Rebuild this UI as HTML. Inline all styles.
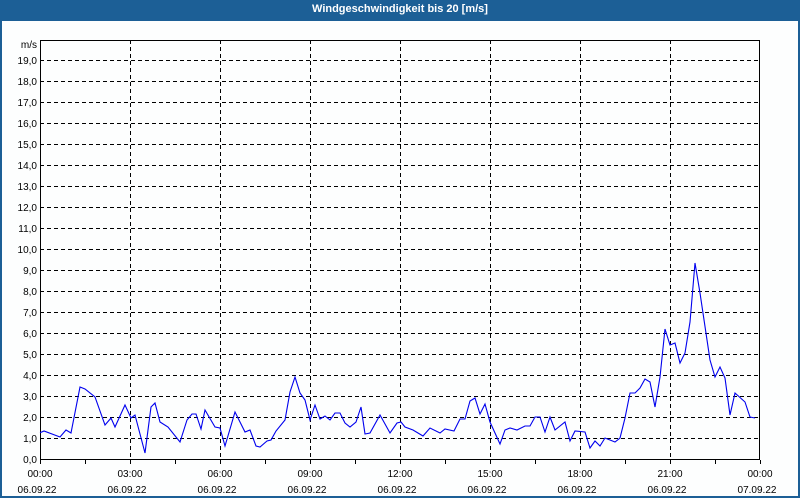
<!DOCTYPE html>
<html><head><meta charset="utf-8"><style>
html,body{margin:0;padding:0;background:#fff}
.win{position:absolute;left:0;top:0;width:796px;height:496px;border:2px solid #1c5f96;border-top:none;background:#fdfefe}
.title{position:absolute;left:0;top:0;width:800px;height:21px;background:#1c5f96;color:#fff;font:bold 11px "Liberation Sans",sans-serif;text-align:center;line-height:19px}
svg{position:absolute;left:0;top:0}
text{font-family:"Liberation Sans",sans-serif;font-size:10px;fill:#000}
</style></head><body>
<div class="win"></div>
<div class="title">Windgeschwindigkeit bis 20 [m/s]</div>
<svg width="800" height="500">
<g stroke="#000" stroke-dasharray="4,3" stroke-width="1">
<path d="M40 60.5H760M40 81.5H760M40 102.5H760M40 123.5H760M40 144.5H760M40 165.5H760M40 186.5H760M40 207.5H760M40 228.5H760M40 249.5H760M40 270.5H760M40 291.5H760M40 312.5H760M40 333.5H760M40 354.5H760M40 375.5H760M40 396.5H760M40 417.5H760M40 438.5H760"/>
<path d="M130.5 40V460M220.5 40V460M310.5 40V460M400.5 40V460M490.5 40V460M580.5 40V460M670.5 40V460"/>
</g>
<rect x="40.5" y="40.5" width="719" height="419" fill="none" stroke="#000"/>
<path stroke="#000" d="M85.5 460v4M130.5 460v4M175.5 460v4M220.5 460v4M265.5 460v4M310.5 460v4M355.5 460v4M400.5 460v4M445.5 460v4M490.5 460v4M535.5 460v4M580.5 460v4M625.5 460v4M670.5 460v4M715.5 460v4M40.5 460v4M760.5 460v4"/>
<polyline fill="none" stroke="#0000ee" stroke-width="1.1" points="40,432.7 44,431 60,437 66,430 71,433 80,387 85,389 95,397 105,425 111,418 115,427 125,405 131,418 135,415 145,453 151,407 155,403 160,422 168,427 180,442 187,420 192,414 196,414 201,429 205,410 215,427 220,428 225,446 235,412 245,432 250,430 256,446 260,447 267,441 271,440 276,431 285,420 290,392 295,377 300,393 305,400 310,420 315,405 320,419 325,416 330,420 335,413 340,413 345,423 350,427 356,422 361,407 365,434 370,433 380,415 390,433 397,423 401,422 405,427 413,430 423,436 430,428 440,433 445,429 454,431 460,419 465,419 470,401 475,398 480,414 485,404 490,422 500,444 505,430 510,428 517,430 525,426 530,426 535,417 540,417 545,432 550,417 555,430 565,422 570,441 575,431 585,432 590,448 595,441 600,446 605,438 615,442 620,438 625,418 630,393 635,393 640,388 645,379 650,382 655,407 660,377 665,329 670,345 675,343 680,363 685,353 690,322 695,263 700,293 710,360 715,377 720,367 725,378 730,415 735,393 745,402 750,417 755,418"/>
<g text-anchor="end">
<text x="37" y="48">m/s</text>
<text x="37" y="64">19,0</text><text x="37" y="85">18,0</text><text x="37" y="106">17,0</text><text x="37" y="127">16,0</text><text x="37" y="148">15,0</text><text x="37" y="169">14,0</text><text x="37" y="190">13,0</text><text x="37" y="211">12,0</text><text x="37" y="232">11,0</text><text x="37" y="253">10,0</text><text x="37" y="274">9,0</text><text x="37" y="295">8,0</text><text x="37" y="316">7,0</text><text x="37" y="337">6,0</text><text x="37" y="358">5,0</text><text x="37" y="379">4,0</text><text x="37" y="400">3,0</text><text x="37" y="421">2,0</text><text x="37" y="442">1,0</text><text x="37" y="463">0,0</text>
</g>
<g text-anchor="middle">
<text x="40" y="477">00:00</text><text x="130" y="477">03:00</text><text x="220" y="477">06:00</text><text x="310" y="477">09:00</text><text x="400" y="477">12:00</text><text x="490" y="477">15:00</text><text x="580" y="477">18:00</text><text x="670" y="477">21:00</text><text x="760" y="477">00:00</text>
<text x="37" y="493">06.09.22</text><text x="127" y="493">06.09.22</text><text x="217" y="493">06.09.22</text><text x="307" y="493">06.09.22</text><text x="397" y="493">06.09.22</text><text x="487" y="493">06.09.22</text><text x="577" y="493">06.09.22</text><text x="667" y="493">06.09.22</text><text x="757" y="493">07.09.22</text>
</g>
</svg>
</body></html>
